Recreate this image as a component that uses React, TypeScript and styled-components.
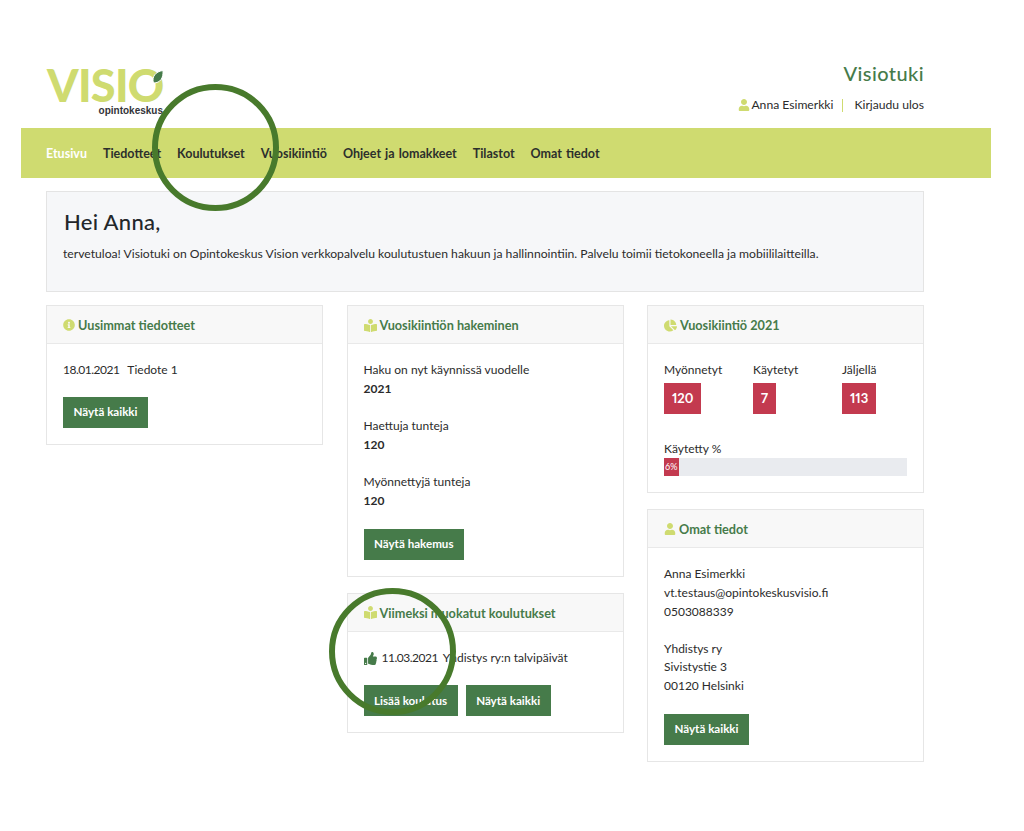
import React from "react";
import styled, { createGlobalStyle } from "styled-components";
import { FaBookReader, FaChartPie, FaInfoCircle, FaThumbsUp, FaUser } from "react-icons/fa";

const Global = createGlobalStyle`
  html, body { margin: 0; padding: 0; background: #fff; }
  body { font-family: "Lato", "Noto Sans", sans-serif; color: #2b2b2b; }
  * { box-sizing: border-box; }
`;

const Page = styled.div`
  position: relative;
  width: 1024px;
  height: 831px;
  overflow: hidden;
  padding: 60px 33px 0 21px;
`;

const Header = styled.header`
  display: flex;
  justify-content: space-between;
  height: 68px;
  padding: 0 67px 0 25px;
`;

const Logo = styled.div`
  position: relative;
  width: 118px;
  height: 60px;
  padding-left: 1px;
`;

const LogoWord = styled.div`
  font-family: "Lato", sans-serif;
  font-weight: 900;
  font-size: 45px;
  line-height: 40px;
  letter-spacing: -0.7px;
  color: #cfdb70;
  margin-top: 5px;
`;

const LogoSub = styled.div`
  font-family: "Liberation Sans", sans-serif;
  font-weight: 700;
  font-size: 10px;
  line-height: 11px;
  color: #33353a;
  text-align: right;
  padding-right: 1px;
`;

const Leaf = styled.svg`
  position: absolute;
  left: 106px;
  top: 10px;
`;

const HeaderRight = styled.div`
  display: flex;
  flex-direction: column;
  align-items: flex-end;
`;

const SiteName = styled.div`
  font-size: 20px;
  line-height: 28px;
  font-weight: 500;
  color: #467b4a;
  letter-spacing: 0.4px;
  margin-top: -1px;
`;

const UserRow = styled.div`
  display: flex;
  align-items: center;
  margin-top: 9px;
  font-size: 12.15px;
  line-height: 18px;
  color: #2b2b2b;
`;

const UserName = styled.span`
  display: flex;
  align-items: center;
  gap: 1px;
  color: #2b2b2b;
  svg { color: #cfdb70; }
`;

const Sep = styled.span`
  width: 1px;
  height: 13px;
  background: #cfdb70;
  margin: 0 11px 0 9px;
`;

const Nav = styled.nav`
  display: flex;
  align-items: center;
  gap: 16px;
  height: 50px;
  padding-left: 25px;
  background: #cfdb70;
`;

const NavItem = styled.a<{ $active?: boolean }>`
  font-size: 12.5px;
  font-weight: 700;
  word-spacing: 1px;
  color: ${(p) => (p.$active ? "#fff" : "#2c2f2c")};
`;

const Main = styled.main`
  padding: 13px 67px 0 25px;
`;

const Hero = styled.section`
  height: 101px;
  background: #f6f7f9;
  border: 1px solid #e4e4e4;
  padding: 15px 16px 0 16px;
`;

const HeroTitle = styled.h1`
  margin: 0 0 0 1px;
  font-size: 22px;
  line-height: 30px;
  font-weight: 500;
  letter-spacing: 0.3px;
  color: #23272b;
`;

const HeroText = styled.p`
  margin: 8px 0 0;
  font-size: 12.17px;
  line-height: 18px;
  color: #2b2b2b;
`;

const Columns = styled.div`
  display: grid;
  grid-template-columns: repeat(3, 277px);
  column-gap: 23.5px;
  margin-top: 13px;
  align-items: start;
`;

const Column = styled.div`
  display: flex;
  flex-direction: column;
  gap: 16px;
`;

const Card = styled.section`
  background: #fff;
  border: 1px solid #e6e6e6;
`;

const CardHead = styled.h2`
  display: flex;
  align-items: center;
  gap: 3px;
  height: 38px;
  margin: 0;
  padding: 1px 16px 0;
  background: #f8f8f8;
  border-bottom: 1px solid #e9e9e9;
  font-size: 12.7px;
  font-weight: 700;
  color: #467b4a;
  svg { color: #cfdb70; flex: none; }
`;

const CardBody = styled.div`
  padding: 17px 16px 16px;
  font-size: 12px;
  line-height: 18.75px;
  color: #2b2b2b;
`;

const Block = styled.div`
  margin-bottom: 18.4px;
  strong { display: block; font-weight: 700; }
`;

const Line = styled.div<{ $gap?: number; $below?: number }>`
  display: flex;
  align-items: center;
  gap: ${(p) => p.$gap ?? 8}px;
  margin-bottom: ${(p) => p.$below ?? 17}px;
  svg { color: #467b4a; }
`;

const DateText = styled.span`
  letter-spacing: -0.5px;
`;

const Button = styled.a`
  display: inline-flex;
  align-items: center;
  justify-content: center;
  height: 31px;
  padding: 0 10.5px;
  background: #467b4a;
  color: #fff;
  font-size: 11.6px;
  font-weight: 700;
`;

const Buttons = styled.div`
  display: flex;
  gap: 8px;
`;

const Stats = styled.div`
  display: grid;
  grid-template-columns: repeat(3, 89px);
`;

const StatLabel = styled.div`
  line-height: 18px;
  margin-bottom: 4px;
`;

const Badge = styled.div`
  display: inline-flex;
  align-items: center;
  justify-content: center;
  height: 31px;
  padding: 0 8px;
  background: #c33a4f;
  color: #fff;
  font-size: 13px;
  font-weight: 700;
  line-height: 31px;
  font-variant-numeric: proportional-nums;
`;

const BarLabel = styled.div`
  margin-top: 26px;
  line-height: 18px;
`;

const Bar = styled.div`
  height: 18px;
  width: 243px;
  background: #e9ebef;
`;

const BarFill = styled.div`
  height: 100%;
  background: #c33a4f;
  color: #fff;
  font-size: 9px;
  line-height: 18px;
  text-align: center;
`;

const Ring = styled.div<{ $x: number; $y: number }>`
  position: absolute;
  left: ${(p) => p.$x}px;
  top: ${(p) => p.$y}px;
  width: 127px;
  height: 127px;
  border: 6px solid #487a2c;
  border-radius: 50%;
  pointer-events: none;
`;

export default function App() {
  return (
    <Page>
      <Global />
      <Header>
        <Logo>
          <LogoWord>VISIO</LogoWord>
          <LogoSub>opintokeskus</LogoSub>
          <Leaf width="12" height="14" viewBox="0 0 12 14">
            <path d="M1.5 13C-.5 7 3.5 1.5 11 .5 11.5 8 8.5 13 1.5 13Z" fill="#467b4a" stroke="#fff" strokeWidth="1" />
          </Leaf>
        </Logo>
        <HeaderRight>
          <SiteName>Visiotuki</SiteName>
          <UserRow>
            <UserName><FaUser size={12} />Anna Esimerkki</UserName>
            <Sep />
            <span>Kirjaudu ulos</span>
          </UserRow>
        </HeaderRight>
      </Header>
      <Nav>
        <NavItem $active>Etusivu</NavItem>
        <NavItem>Tiedotteet</NavItem>
        <NavItem>Koulutukset</NavItem>
        <NavItem>Vuosikiintiö</NavItem>
        <NavItem>Ohjeet ja lomakkeet</NavItem>
        <NavItem>Tilastot</NavItem>
        <NavItem>Omat tiedot</NavItem>
      </Nav>
      <Main>
        <Hero>
          <HeroTitle>Hei Anna,</HeroTitle>
          <HeroText>
            tervetuloa! Visiotuki on Opintokeskus Vision verkkopalvelu koulutustuen hakuun ja hallinnointiin. Palvelu toimii tietokoneella ja mobiililaitteilla.
          </HeroText>
        </Hero>
        <Columns>
          <Column>
            <Card>
              <CardHead><FaInfoCircle size={12} />Uusimmat tiedotteet</CardHead>
              <CardBody>
                <Line><DateText>18.01.2021</DateText><span>Tiedote 1</span></Line>
                <Button>Näytä kaikki</Button>
              </CardBody>
            </Card>
          </Column>
          <Column>
            <Card>
              <CardHead><FaBookReader size={13} />Vuosikiintiön hakeminen</CardHead>
              <CardBody>
                <Block>Haku on nyt käynnissä vuodelle<strong>2021</strong></Block>
                <Block>Haettuja tunteja<strong>120</strong></Block>
                <Block>Myönnettyjä tunteja<strong>120</strong></Block>
                <Button>Näytä hakemus</Button>
              </CardBody>
            </Card>
            <Card>
              <CardHead><FaBookReader size={13} />Viimeksi muokatut koulutukset</CardHead>
              <CardBody>
                <Line $gap={5} $below={18}><FaThumbsUp size={13} /><DateText>11.03.2021</DateText><span>Yhdistys ry:n talvipäivät</span></Line>
                <Buttons>
                  <Button>Lisää koulutus</Button>
                  <Button>Näytä kaikki</Button>
                </Buttons>
              </CardBody>
            </Card>
          </Column>
          <Column>
            <Card>
              <CardHead><FaChartPie size={13} />Vuosikiintiö 2021</CardHead>
              <CardBody>
                <Stats>
                  <div><StatLabel>Myönnetyt</StatLabel><Badge>120</Badge></div>
                  <div><StatLabel>Käytetyt</StatLabel><Badge>7</Badge></div>
                  <div><StatLabel>Jäljellä</StatLabel><Badge>113</Badge></div>
                </Stats>
                <BarLabel>Käytetty %</BarLabel>
                <Bar><BarFill style={{ width: "6%" }}>6%</BarFill></Bar>
              </CardBody>
            </Card>
            <Card>
              <CardHead><FaUser size={12} />Omat tiedot</CardHead>
              <CardBody>
                <Block>Anna Esimerkki<br />vt.testaus@opintokeskusvisio.fi<br />0503088339</Block>
                <Block>Yhdistys ry<br />Sivistystie 3<br />00120 Helsinki</Block>
                <Button>Näytä kaikki</Button>
              </CardBody>
            </Card>
          </Column>
        </Columns>
      </Main>
      <Ring $x={152} $y={84} />
      <Ring $x={329} $y={588} />
    </Page>
  );
}
